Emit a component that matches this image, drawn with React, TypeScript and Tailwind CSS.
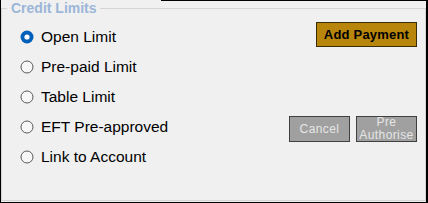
import React from "react";

function Radio({ checked }: { checked: boolean }) {
  return (
    <svg width="14" height="14" viewBox="0 0 14 14" className="shrink-0">
      {checked ? (
        <>
          <circle cx="7" cy="7" r="6.5" fill="#005fb8" />
          <circle cx="7" cy="7" r="2.6" fill="#ffffff" />
        </>
      ) : (
        <circle cx="7" cy="7" r="6" fill="#f7f7f7" stroke="#5a5a5a" strokeWidth="1" />
      )}
    </svg>
  );
}

export default function App() {
  const options = ["Open Limit", "Pre-paid Limit", "Table Limit", "EFT Pre-approved", "Link to Account"];
  return (
    <div
      className="relative w-[428px] h-[203px] bg-[#f0f0f0] border-l border-r-2 border-b border-black"
      style={{ fontFamily: '"Liberation Sans", Arial, sans-serif' }}
    >
      <div className="absolute top-0 left-[160px] right-0 h-px bg-black" />
      <fieldset className="h-[201px] border border-[#d5d5d5] m-0 p-0">
        <legend className="ml-[5px] px-[4px] pr-[3px] text-[14px] font-bold leading-[16px] text-[#9bb6d8]">
          Credit Limits
        </legend>
        <div className="flex justify-between pt-[6px] pl-[18px] pr-[8px]">
          <div className="flex flex-col">
            {options.map((o, i) => (
              <div key={o} className="flex items-center h-[30px] gap-[7px]">
                <Radio checked={i === 0} />
                <span className="text-[15.5px] leading-none text-black">{o}</span>
              </div>
            ))}
          </div>
          <div className="flex flex-col items-end">
            <button className="w-[101px] h-[25px] bg-[#b8860b] border border-[#3a2c05] text-[13px] font-bold tracking-[0.2px] text-black leading-none">
              Add Payment
            </button>
            <div className="flex gap-[6px] mt-[69px]">
              <button className="w-[61px] h-[26px] bg-[#a0a0a0] border border-[#404040] text-[12px] tracking-[0.4px] text-[#e6e6e6] leading-none">
                Cancel
              </button>
              <button className="w-[61px] h-[26px] bg-[#a0a0a0] border border-[#404040] text-[12px] tracking-[0.4px] text-[#e6e6e6] leading-[13px] flex flex-col items-center justify-center">
                <span>Pre</span>
                <span>Authorise</span>
              </button>
            </div>
          </div>
        </div>
      </fieldset>
    </div>
  );
}
